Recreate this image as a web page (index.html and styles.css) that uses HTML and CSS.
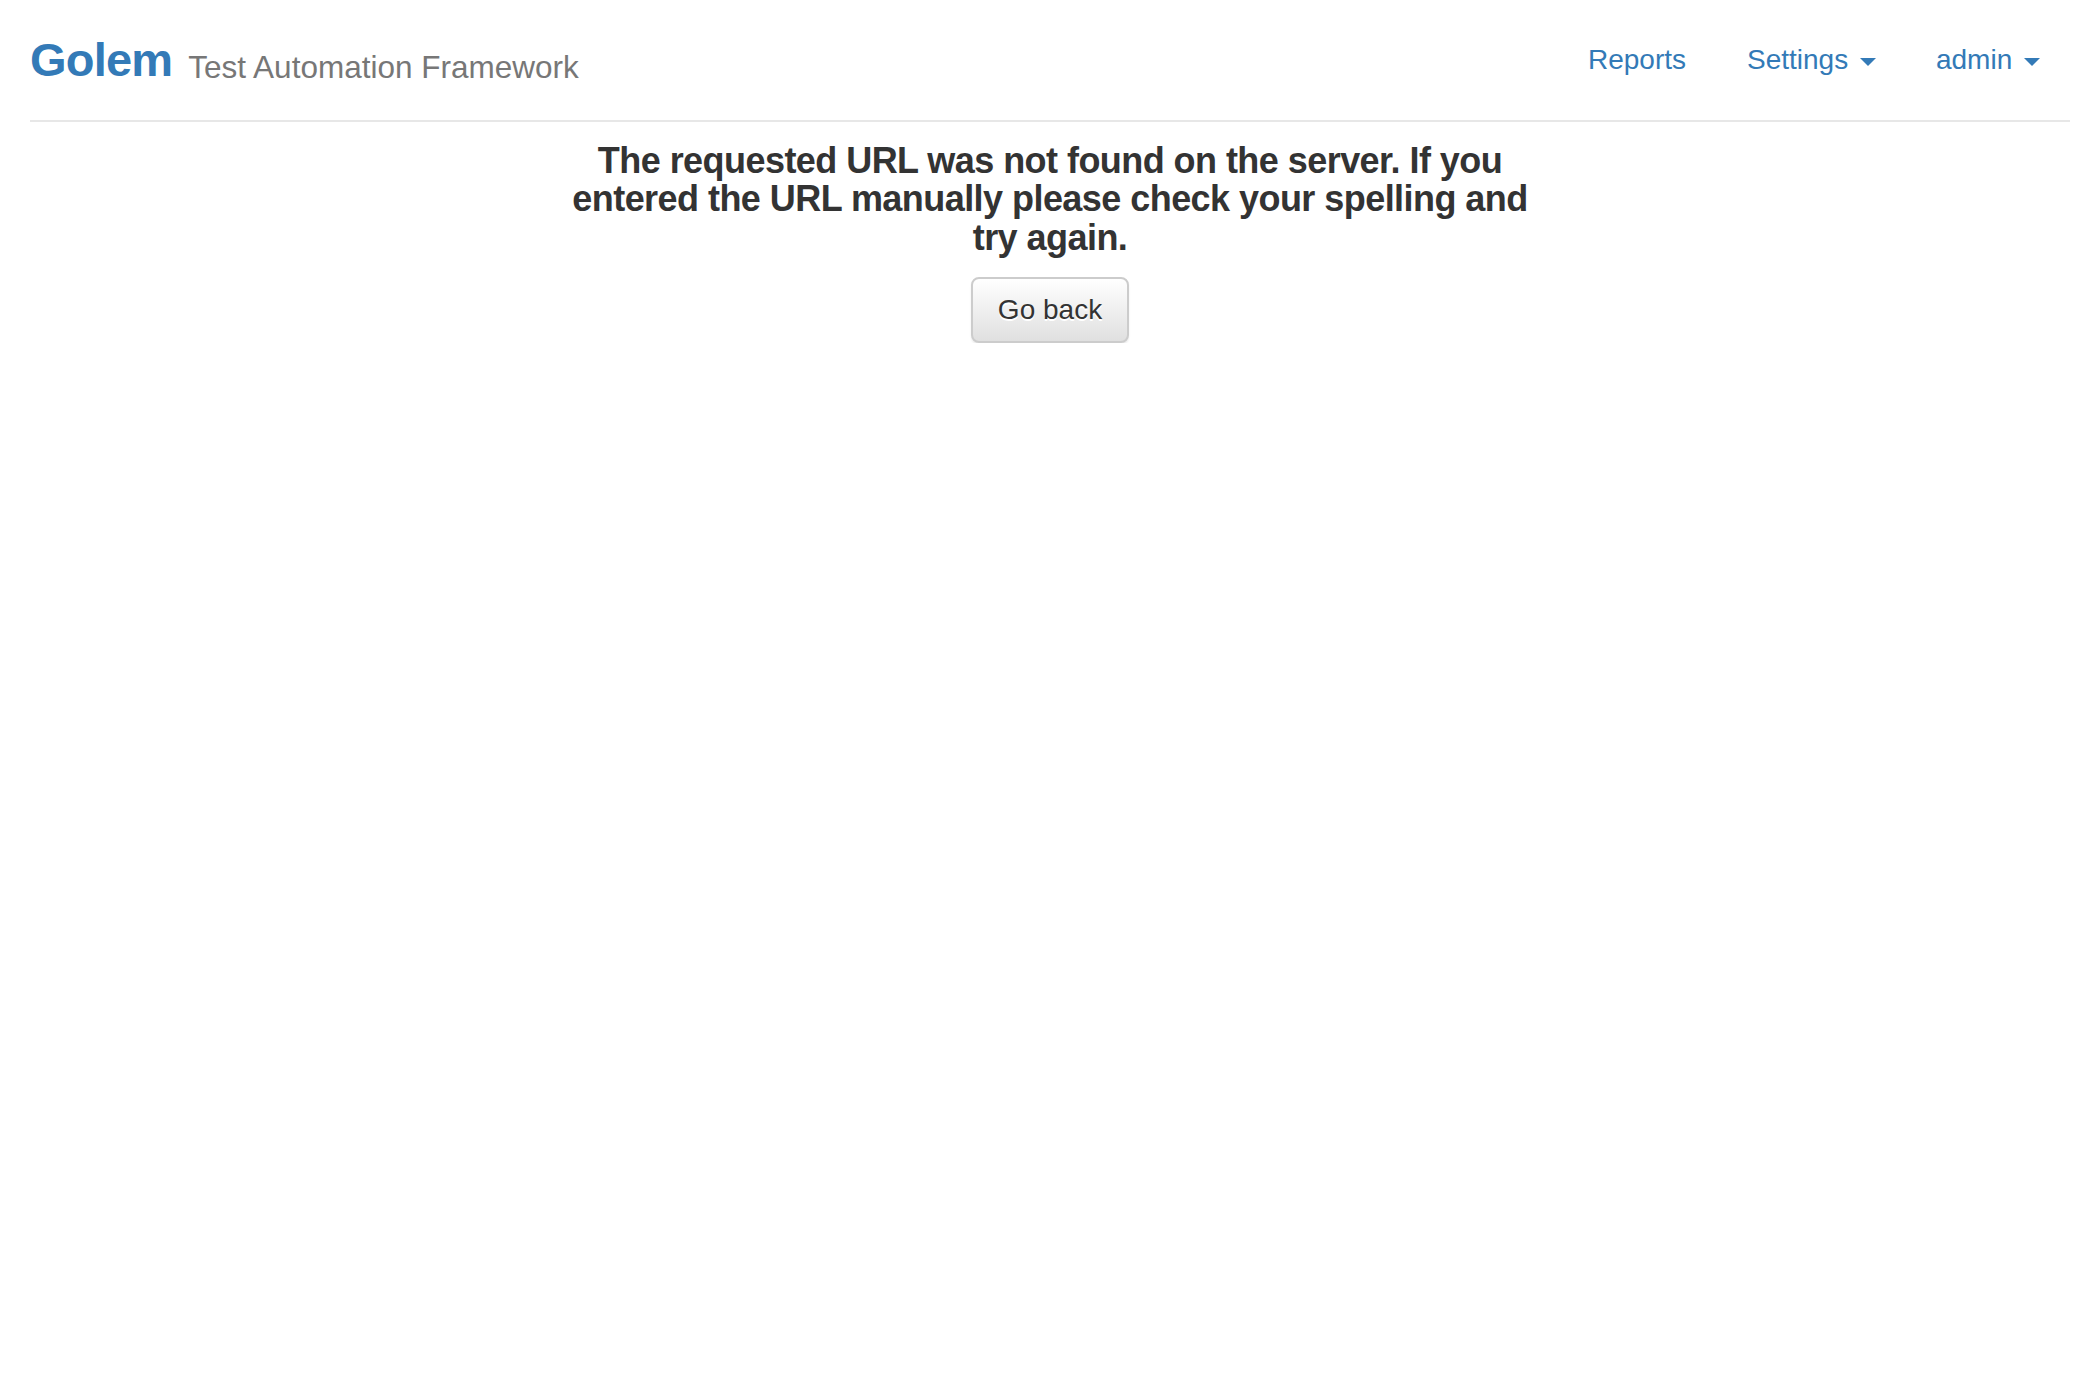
FILE: index.html
```html
<!DOCTYPE html>
<html lang="en">
<head>
<meta charset="utf-8">
<title>Golem - Test Automation Framework</title>
<link rel="stylesheet" href="styles.css">
</head>
<body>
<div class="page">
  <header class="navbar">
    <div class="brand"><span class="brand-name">Golem</span> <span class="brand-sub">Test Automation Framework</span></div>
    <ul class="nav">
      <li><a href="#">Reports</a></li>
      <li><a href="#">Settings <span class="caret"></span></a></li>
      <li><a href="#">admin <span class="caret"></span></a></li>
    </ul>
  </header>
  <main class="content">
    <h4 class="message">The requested URL was not found on the server. If you entered the URL manually please check your spelling and try again.</h4>
    <button class="btn" type="button">Go back</button>
  </main>
</div>
</body>
</html>
```

FILE: styles.css
```css
html, body {
  margin: 0;
  padding: 0;
  background: #fff;
}

body {
  font-family: "Liberation Sans", Arial, Helvetica, sans-serif;
  color: #333;
}

.page {
  padding: 0 30px;
}

.navbar {
  display: flex;
  justify-content: space-between;
  align-items: flex-start;
  height: 120px;
  border-bottom: 2px solid #e7e7e7;
}

.brand {
  margin-top: 36px;
  font-size: 47px;
  line-height: 48px;
  white-space: nowrap;
}

.brand-name {
  color: #337ab7;
  font-weight: bold;
  letter-spacing: -0.8px;
}

.brand-sub {
  font-size: 31.5px;
  color: #777;
  vertical-align: -2px;
  margin-left: 3px;
}

.nav {
  display: flex;
  list-style: none;
  margin: 40px 0 0 0;
  padding: 0;
}

.nav a {
  display: block;
  padding: 0 30px;
  font-size: 28px;
  line-height: 40px;
  color: #337ab7;
  text-decoration: none;
  white-space: nowrap;
}

.nav li:first-child a {
  padding-right: 31px;
}

.caret {
  display: inline-block;
  width: 0;
  height: 0;
  margin-left: 4px;
  vertical-align: middle;
  border-top: 8px solid #337ab7;
  border-left: 8px solid transparent;
  border-right: 8px solid transparent;
}

.content {
  width: 990px;
  margin: 0 auto;
  text-align: center;
}

.message {
  margin: 20px 0 20px 0;
  font-size: 36px;
  line-height: 38.4px;
  font-weight: bold;
  letter-spacing: -0.55px;
  color: #333;
}

.btn {
  display: inline-block;
  padding: 11px 25px;
  font-family: "Liberation Sans", Arial, Helvetica, sans-serif;
  font-size: 28px;
  line-height: 40px;
  color: #333;
  background-color: #e0e0e0;
  background-image: linear-gradient(to bottom, #fff 0, #e0e0e0 100%);
  border: 2px solid #ccc;
  border-radius: 8px;
  text-shadow: 0 2px 0 #fff;
  box-shadow: inset 0 2px 0 rgba(255, 255, 255, .15), 0 2px 2px rgba(0, 0, 0, .075);
  cursor: pointer;
}
```
